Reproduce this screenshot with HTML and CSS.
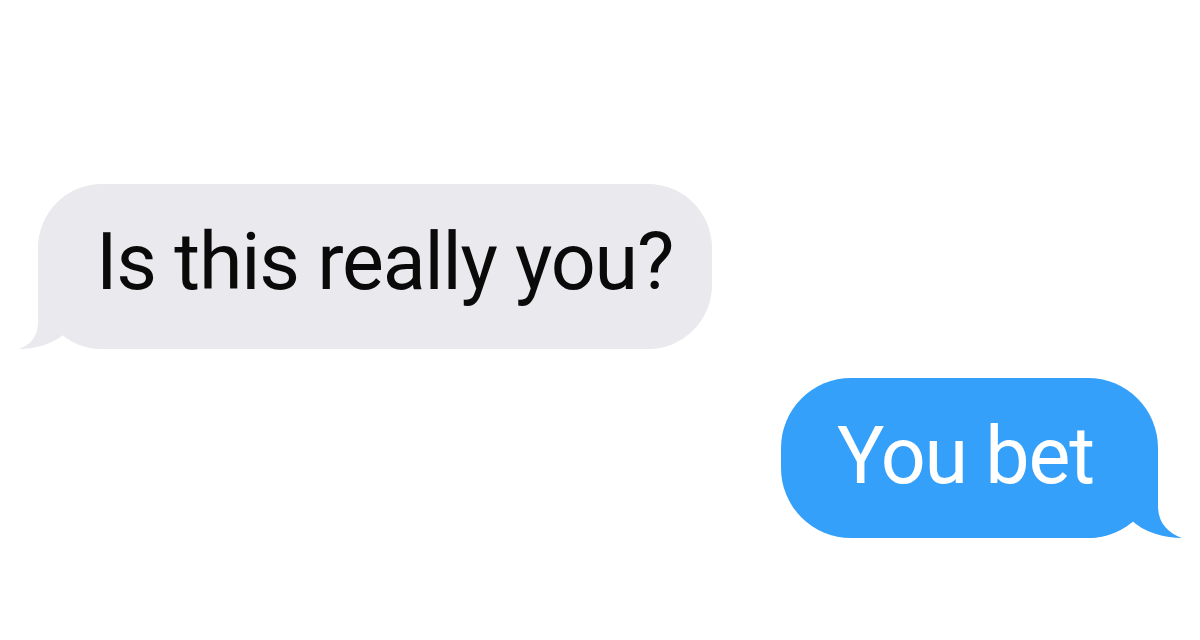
FILE: index.html
```html
<!DOCTYPE html>
<html>
<head>
<meta charset="utf-8">
<link rel="stylesheet" href="styles.css">
</head>
<body>
<main class="thread">
  <div class="row row-in">
    <div class="bubble bubble-in">
      <span class="msg msg-in">Is this really you?</span>
      <svg class="tail tail-in" viewBox="0 0 130 80" aria-hidden="true"><path d="M20 0 L20 53 C20 68 12 76 1 80 C15 80 35 76 47 64 C58 74 72 80 92 80 L92 0 Z"/></svg>
    </div>
  </div>
  <div class="row row-out">
    <div class="bubble bubble-out">
      <span class="msg msg-out">You bet</span>
      <svg class="tail tail-out" viewBox="0 0 130 80" aria-hidden="true"><path d="M24 0 L24 48 C24 65 14 75 0 80 C16 80 38 75 52 61 C63 74 76 80 96 80 L96 0 Z"/></svg>
    </div>
  </div>
</main>
</body>
</html>
```
FILE: styles.css
```css
html, body {
  margin: 0;
  padding: 0;
  background: #ffffff;
}
body {
  width: 1200px;
  height: 640px;
  overflow: hidden;
  font-family: Roboto, "Liberation Sans", Arial, sans-serif;
}
.thread {
  display: flex;
  flex-direction: column;
  gap: 29px;
  padding: 184px 42px 0 38px;
}
.row {
  display: flex;
}
.row-out {
  justify-content: flex-end;
}
.bubble {
  position: relative;
  display: flex;
  align-items: center;
  box-sizing: border-box;
}
.msg {
  position: relative;
  z-index: 1;
  font-size: 79px;
  line-height: 1;
  white-space: nowrap;
}
.msg-in {
  letter-spacing: -1.2px;
}
.msg-out {
  letter-spacing: -1.2px;
}
.bubble-in {
  width: 674px;
  height: 165px;
  padding: 0 0 8px 58px;
  background: #e9e9ee;
  border-radius: 64px;
  color: #0a0a0a;
}
.bubble-out {
  width: 377px;
  height: 160px;
  padding: 0 0 4px 56px;
  background: #35a0fa;
  border-radius: 70px;
  color: #ffffff;
}
.tail {
  position: absolute;
  bottom: 0;
  width: 130px;
  height: 80px;
}
.tail-in {
  left: -20px;
  fill: #e9e9ee;
}
.tail-out {
  right: -24px;
  fill: #35a0fa;
  transform: scaleX(-1);
}
```
